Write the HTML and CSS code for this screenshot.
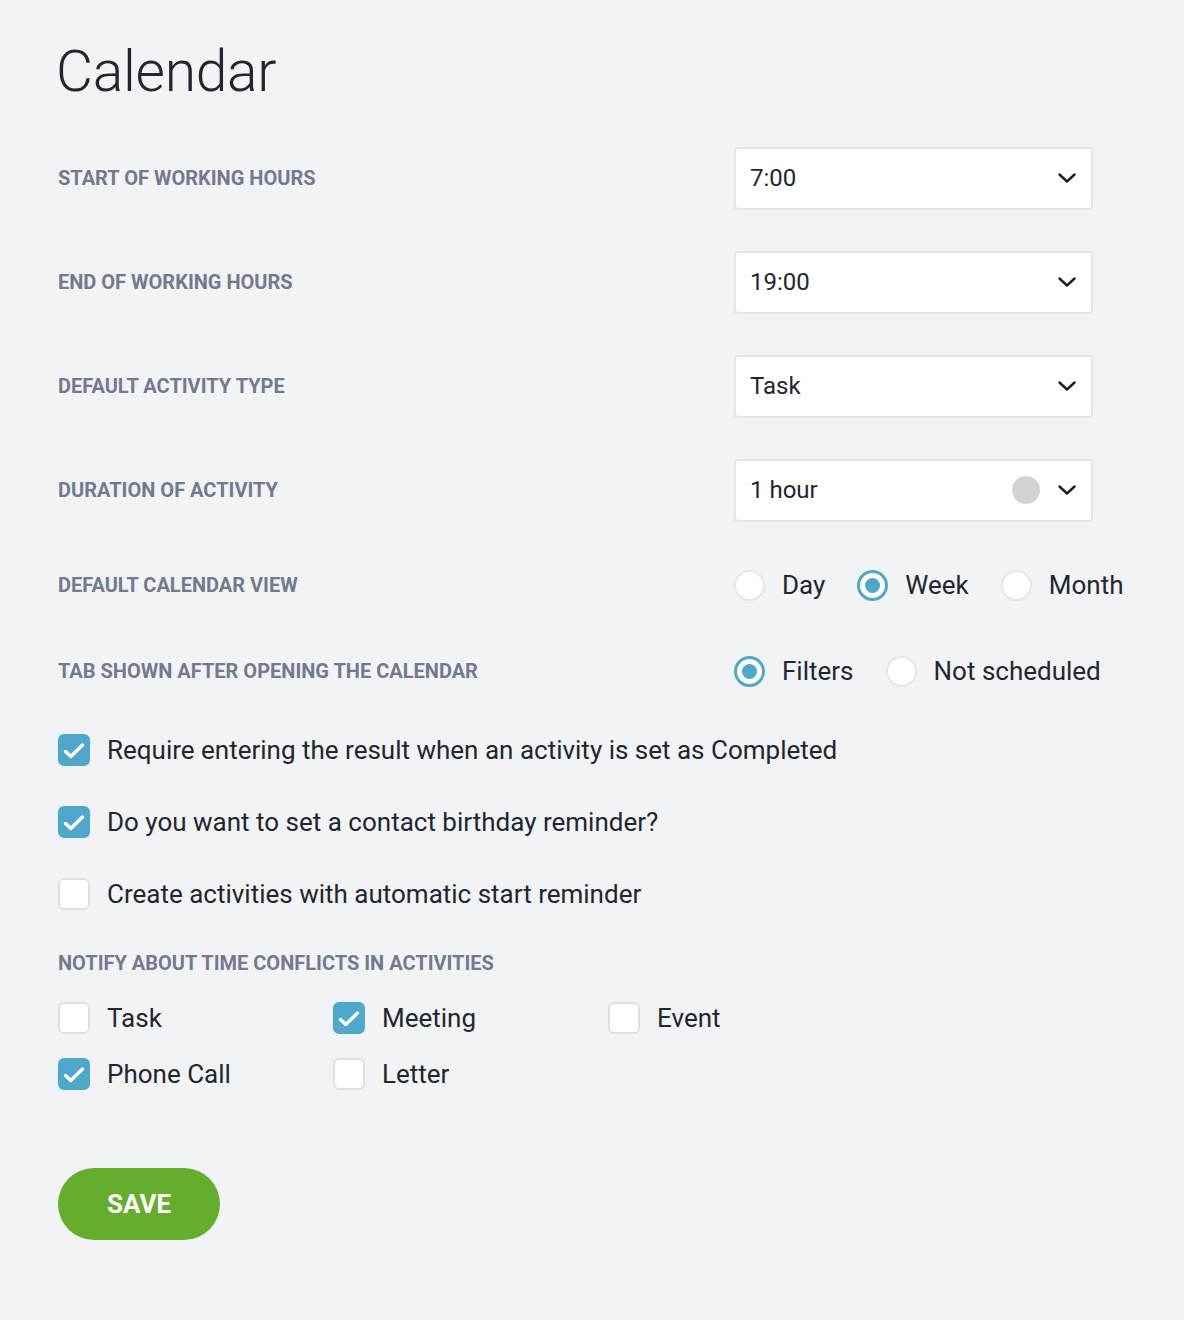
FILE: index.html
```html
<!DOCTYPE html>
<html lang="en">
<head>
<meta charset="utf-8">
<title>Calendar</title>
<link rel="stylesheet" href="styles.css">
</head>
<body>
<main class="page">
  <h1 class="title">Calendar</h1>

  <div class="row row-select">
    <div class="label">START OF WORKING HOURS</div>
    <div class="select"><span class="value">7:00</span><svg class="chev" viewBox="0 0 18 10" width="18" height="10"><path d="M1.5 1.5 L9 8.5 L16.5 1.5" fill="none" stroke="#1a1c22" stroke-width="2.4" stroke-linecap="round" stroke-linejoin="round"/></svg></div>
  </div>

  <div class="row row-select">
    <div class="label">END OF WORKING HOURS</div>
    <div class="select"><span class="value">19:00</span><svg class="chev" viewBox="0 0 18 10" width="18" height="10"><path d="M1.5 1.5 L9 8.5 L16.5 1.5" fill="none" stroke="#1a1c22" stroke-width="2.4" stroke-linecap="round" stroke-linejoin="round"/></svg></div>
  </div>

  <div class="row row-select">
    <div class="label">DEFAULT ACTIVITY TYPE</div>
    <div class="select"><span class="value">Task</span><svg class="chev" viewBox="0 0 18 10" width="18" height="10"><path d="M1.5 1.5 L9 8.5 L16.5 1.5" fill="none" stroke="#1a1c22" stroke-width="2.4" stroke-linecap="round" stroke-linejoin="round"/></svg></div>
  </div>

  <div class="row row-select">
    <div class="label">DURATION OF ACTIVITY</div>
    <div class="select"><span class="value">1 hour</span><span class="dot"></span><svg class="chev" viewBox="0 0 18 10" width="18" height="10"><path d="M1.5 1.5 L9 8.5 L16.5 1.5" fill="none" stroke="#1a1c22" stroke-width="2.4" stroke-linecap="round" stroke-linejoin="round"/></svg></div>
  </div>

  <div class="row row-radio first-radio">
    <div class="label">DEFAULT CALENDAR VIEW</div>
    <div class="radios">
      <label class="radio"><span class="circle"></span><span class="rtext">Day</span></label>
      <label class="radio"><span class="circle on"></span><span class="rtext">Week</span></label>
      <label class="radio"><span class="circle"></span><span class="rtext">Month</span></label>
    </div>
  </div>

  <div class="row row-radio second-radio">
    <div class="label">TAB SHOWN AFTER OPENING THE CALENDAR</div>
    <div class="radios">
      <label class="radio"><span class="circle on"></span><span class="rtext">Filters</span></label>
      <label class="radio"><span class="circle"></span><span class="rtext">Not scheduled</span></label>
    </div>
  </div>

  <div class="checks">
    <label class="check"><span class="box on"><svg viewBox="0 0 32 32" width="32" height="32"><path d="M7.5 17.5 L12.8 22.5 L24.5 11" fill="none" stroke="#fff" stroke-width="3.4" stroke-linecap="round" stroke-linejoin="round"/></svg></span><span class="ctext">Require entering the result when an activity is set as Completed</span></label>
    <label class="check"><span class="box on"><svg viewBox="0 0 32 32" width="32" height="32"><path d="M7.5 17.5 L12.8 22.5 L24.5 11" fill="none" stroke="#fff" stroke-width="3.4" stroke-linecap="round" stroke-linejoin="round"/></svg></span><span class="ctext">Do you want to set a contact birthday reminder?</span></label>
    <label class="check"><span class="box"></span><span class="ctext">Create activities with automatic start reminder</span></label>
  </div>

  <div class="label notify-label">NOTIFY ABOUT TIME CONFLICTS IN ACTIVITIES</div>
  <div class="grid">
    <label class="check"><span class="box"></span><span class="ctext">Task</span></label>
    <label class="check"><span class="box on"><svg viewBox="0 0 32 32" width="32" height="32"><path d="M7.5 17.5 L12.8 22.5 L24.5 11" fill="none" stroke="#fff" stroke-width="3.4" stroke-linecap="round" stroke-linejoin="round"/></svg></span><span class="ctext">Meeting</span></label>
    <label class="check"><span class="box"></span><span class="ctext">Event</span></label>
    <label class="check"><span class="box on"><svg viewBox="0 0 32 32" width="32" height="32"><path d="M7.5 17.5 L12.8 22.5 L24.5 11" fill="none" stroke="#fff" stroke-width="3.4" stroke-linecap="round" stroke-linejoin="round"/></svg></span><span class="ctext">Phone Call</span></label>
    <label class="check"><span class="box"></span><span class="ctext">Letter</span></label>
  </div>

  <button class="save" type="button">SAVE</button>
</main>
</body>
</html>
```

FILE: styles.css
```css
html, body {
  margin: 0;
  padding: 0;
  background: #f2f3f5;
}

body {
  font-family: Roboto, "Liberation Sans", Arial, sans-serif;
  color: #262931;
  width: 1184px;
  min-height: 1320px;
}

.page {
  padding: 40px 58px 80px 58px;
}

.title {
  margin: 0 0 0 -2px;
  font-size: 57px;
  font-weight: 300;
  line-height: 64px;
  color: #23262e;
  letter-spacing: -0.3px;
}

.label {
  font-size: 20px;
  font-weight: 700;
  color: #737a8d;
  letter-spacing: 0;
}

.row {
  display: flex;
  align-items: center;
}

.row .label {
  width: 676px;
  flex: none;
}

.row-select {
  height: 62px;
  margin-bottom: 42px;
}

.row-select:first-of-type {
  margin-top: 43px;
}

.select {
  box-sizing: border-box;
  width: 359px;
  height: 63px;
  background: #fff;
  border: 2px solid #e4e6ea;
  border-radius: 4px;
  display: flex;
  align-items: center;
  padding: 0 15px 0 14px;
}

.value {
  flex: 1;
  font-size: 24px;
  color: #23262e;
}

.dot {
  width: 28px;
  height: 28px;
  border-radius: 50%;
  background: #d3d3d3;
  margin-right: 18px;
}

.chev {
  display: block;
}

.row-radio {
  height: 32px;
}

.first-radio {
  margin-top: 48px;
}

.second-radio {
  margin-top: 54px;
}

.radios {
  display: flex;
  align-items: center;
  gap: 32px;
}

.radio {
  display: flex;
  align-items: center;
  gap: 17px;
  font-size: 26px;
  color: #23262e;
}

.circle {
  box-sizing: border-box;
  width: 31px;
  height: 31px;
  border-radius: 50%;
  background: #fff;
  border: 2px solid #e4e6ea;
  display: flex;
  align-items: center;
  justify-content: center;
}

.circle.on {
  border: 3px solid #4fa8c9;
}

.circle.on::after {
  content: "";
  width: 15px;
  height: 15px;
  border-radius: 50%;
  background: #4fa8c9;
}

.checks {
  margin-top: 47px;
  display: flex;
  flex-direction: column;
  gap: 40px;
}

.check {
  display: flex;
  align-items: center;
  gap: 17px;
  font-size: 26px;
  color: #23262e;
  height: 32px;
}

.box {
  box-sizing: border-box;
  width: 32px;
  height: 32px;
  flex: none;
  border-radius: 6px;
  background: #fff;
  border: 2px solid #dcdfe4;
}

.box.on {
  background: #4fa8c9;
  border-color: #4fa8c9;
}

.box svg {
  display: block;
  margin: -2px;
}

.notify-label {
  margin-top: 37px;
  line-height: 32px;
}

.grid {
  margin-top: 23px;
  display: grid;
  grid-template-columns: 275px 275px 275px;
  row-gap: 24px;
}

.save {
  margin-top: 78px;
  width: 162px;
  height: 72px;
  border: none;
  border-radius: 36px;
  background: #67ad2d;
  color: #fff;
  font-family: Roboto, "Liberation Sans", Arial, sans-serif;
  font-size: 26px;
  font-weight: 700;
  padding: 0;
}
```
